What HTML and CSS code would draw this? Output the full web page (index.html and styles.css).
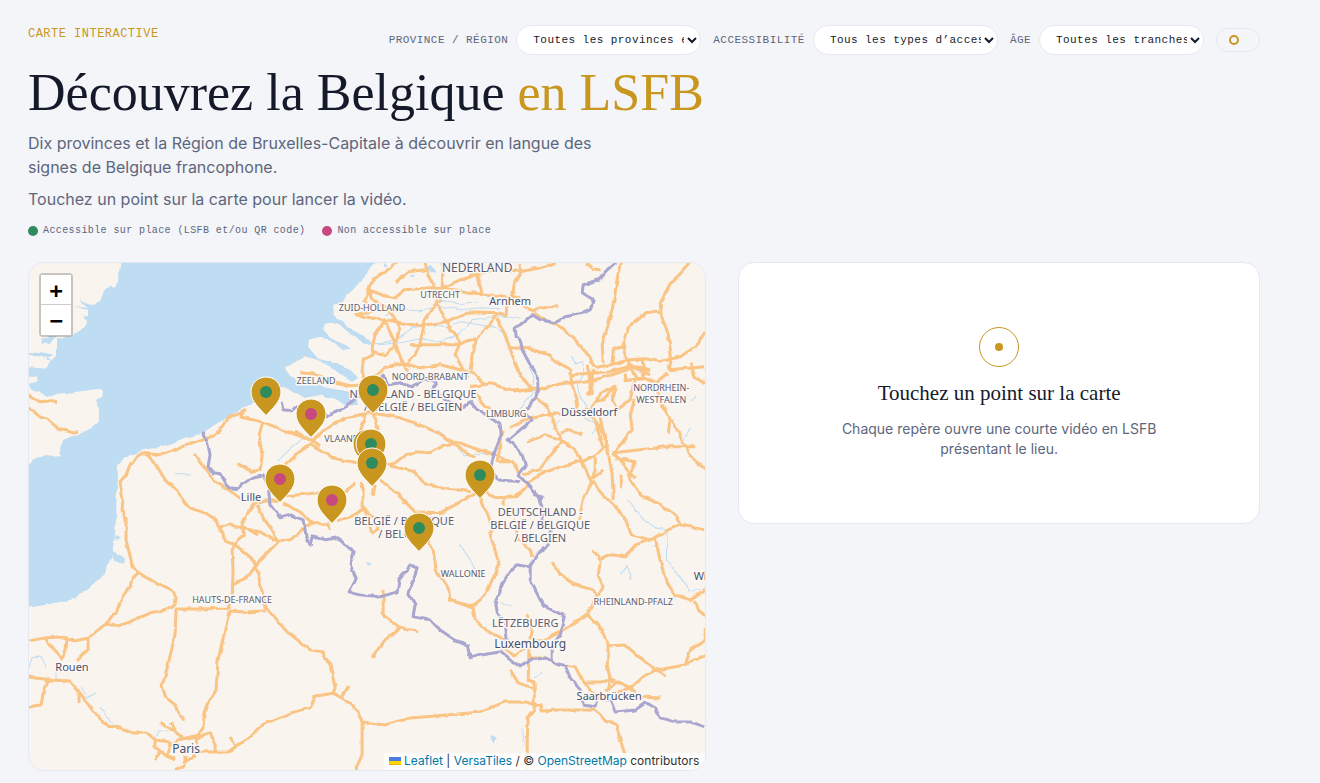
FILE: index.html
```html
<!DOCTYPE html>
<html lang="fr">
<head>
    <meta charset="UTF-8">
    <meta name="viewport" content="width=device-width, initial-scale=1">
    <title>Découvrez la Belgique en LSFB</title>
    <link rel="stylesheet" href="styles.css">
</head>
<body>

<main class="page">
    <header class="intro">
        <div class="topbar">
            <p class="eyebrow">Carte interactive</p>
            <form class="filters">
                <label for="province">Province / Région</label>
                <select id="province" class="filter">
                    <option>Toutes les provinces et régions</option>
                    <option>Bruxelles-Capitale</option>
                    <option>Hainaut</option>
                    <option>Liège</option>
                    <option>Namur</option>
                </select>
                <label for="acces">Accessibilité</label>
                <select id="acces" class="filter">
                    <option>Tous les types d’accessibilité</option>
                    <option>Accessible sur place</option>
                    <option>Non accessible sur place</option>
                </select>
                <label for="age">Âge</label>
                <select id="age" class="filter filter-age">
                    <option>Toutes les tranches d’âge</option>
                    <option>Enfants</option>
                    <option>Adultes</option>
                </select>
                <button type="button" class="status" aria-label="Réinitialiser"><span class="ring"></span></button>
            </form>
        </div>
        <h1>Découvrez la Belgique <em>en LSFB</em></h1>
        <p class="lead">Dix provinces et la Région de Bruxelles-Capitale à découvrir en langue des signes de Belgique francophone.</p>
        <p class="lead">Touchez un point sur la carte pour lancer la vidéo.</p>
        <ul class="legend">
            <li><span class="dot green"></span>Accessible sur place (LSFB et/ou QR code)</li>
            <li><span class="dot pink"></span>Non accessible sur place</li>
        </ul>
    </header>

    <div class="layout">
        <section class="map" aria-label="Carte">
            <svg class="tiles" viewBox="29 263 676 507" preserveAspectRatio="xMidYMid slice">
                <defs>
                    <filter id="rough" x="0" y="0" width="100%" height="100%">
                        <feTurbulence type="fractalNoise" baseFrequency="0.1" numOctaves="2" seed="4"/>
                        <feDisplacementMap in="SourceGraphic" scale="4" xChannelSelector="R" yChannelSelector="G"/>
                    </filter>
                </defs>
                <rect class="land" x="20" y="255" width="700" height="530"/>

                <g filter="url(#rough)">
                    <!-- mer du Nord et Manche -->
                    <path class="water" d="M120 250L120 266 118 280 115 287 110 286 104 292 100 301 96 305 90 305 82 302 80 298 81 303 88 308 72 307 88 310 88 316 82 317 87 321 84 327 78 333 66 337 57 338 57 355 51 361 45 369 36 368 20 367 20 377 36 377 37 381 30 383 31 390 39 391 42 394 51 397 57 394 55 389 48 384 40 382 40 388 56 394 68 393 85 391 100 389 103 391 102 397 96 400 99 410 99 421 90 429 80 434 64 439 60 447 61 458 52 456 43 455 35 459 29 465 20 467 20 609 45 605 60 602 75 599 90 588 105 574 107 565 112 558 113 548 115 535 116 515 117 490 118 475 116 465 122 462 130 455 145 450 165 446 185 438 203 433 215 425 240 410 255 402 268 394 283 387 292 391 305 398 320 395 335 399 347 406 357 405 358 395 345 391 332 389 320 385 308 386 298 382 290 376 285 369 295 362 306 357 317 360 328 366 340 375 352 382 358 378 350 370 340 366 330 362 318 359 308 347 309 340 320 337 332 342 342 350 352 349 340 344 330 337 323 330 325 325 333 323 342 327 350 334 362 342 372 345 368 339 352 330 342 322 334 316 333 305 342 303 349 294 360 282 370 268 376 263 378 250Z"/>
                    <path class="water" d="M29 352L44 354 54 356 44 360 54 361 45 358 29 354ZM42 339L57 336 50 343 40 343ZM111 550L124 559 123 564 114 561ZM115 535L122 538 116 540ZM384 262L388 266 384 268ZM430 265L436 271 431 273 427 268ZM412 274L415 278 410 278ZM490 736L496 738 492 744ZM366 562L372 564 368 566Z"/>
                    <path class="river" d="M362 342L380 344 400 338 412 328 428 324 446 327 460 322 480 325 497 328 508 338M378 345L400 343 420 339 440 342 456 336 472 320 500 316 520 319M385 316L400 310 420 311 440 306 460 310 480 308 500 309M437 303L445 300 457 305 478 303M571 356L576 364 582 362 584 374 577 385 580 398 586 404 584 418 597 425 593 435M529 367L534 378 532 392 522 407 508 418M278 461L288 451 300 441 309 436M437 430L450 440 464 455 490 453M29 668L32 658 40 656 46 668M56 681L56 672 64 666M81 687L88 698 96 692M100 707L112 724M154 739L158 731 168 731M628 500L637 514 655 528 667 530 666 560 680 578 690 592 705 588M620 575L628 566 630 580M460 545L470 560 480 580M190 474L174 474M560 420L552 430M522 727L524 745M534 678L542 673M500 604L512 606M600 420L602 434M690 400L696 396M684 440L690 428"/>

                    <g id="roads">
                        <path d="M29 396L40 402 52 401 57 402M29 408L40 417 48 420 60 430 70 432 78 432"/>
                        <path d="M137 455L130 465 126 475 120 482 123 500 122 510 126 520 126 540 131 560 132 566 137 572 133 580 128 590 118 608 107 623 97 631 88 638 75 641 57 637 45 638 29 641"/>
                        <path d="M137 455L145 454 160 455 173 451 185 446 203 440 213 436 219 431 228 418 245 411 240 417 265 423 285 431 310 440"/>
                        <path d="M145 453L155 463 165 480 180 495 190 508 205 513 216 520 220 530 227 542 235 545 250 557 256 567 261 587 266 608 287 632 310 650 322 652 330 665 335 688 333 693"/>
                        <path d="M137 572L145 577 158 584 170 589 176 598 175 605 160 612 145 615 130 622 118 626 107 623"/>
                        <path d="M175 609L200 609 229 608 232 600 233 570 232 550 237 541 243 535 243 520 255 503 265 500 278 502M233 585L245 578 256 567M229 611L245 612 266 611"/>
                        <path d="M229 611L225 630 218 660 216 690 210 700 204 715 203 728 197 737 187 739"/>
                        <path d="M176 609L175 635 168 665 162 685 165 697 175 705 178 713 184 720"/>
                        <path d="M194 453L205 468 215 482 230 491 241 499M237 464L245 469 257 472M220 527L230 525 243 528 250 531 258 535"/>
                        <path d="M240 465L252 472 260 470 262 455 259 435 263 421M257 505L263 518 272 530 278 542 260 560 256 567M240 528L260 532 278 542 290 540 298 535 305 525 313 524 329 524 330 530M283 503L300 512 313 524M283 496L300 495 318 493 340 495 355 484M337 521L350 517 363 509 363 490 361 482M363 509L368 520 372 534 378 530 376 520 364 509M372 495L374 485"/>
                        <path d="M286 466L295 455 310 445 332 458 345 461 357 463M295 432L310 440 320 447M310 445L323 431 345 418 370 413 400 418 420 425 440 434 455 445 475 458"/>
                        <path d="M388 465L395 463 405 455 415 452 430 453 445 445 460 443 478 450 497 455 510 462M380 480L395 492 415 512 440 513 455 505 470 496 482 490M390 466L415 472 425 485 445 488 470 492"/>
                        <path d="M428 540L433 550 436 570 448 588 450 600 472 608M480 497L485 510 492 525 490 535 495 550 499 565 492 580 485 596 470 608M482 490L495 498 515 497 525 488M504 497L504 505M513 520L518 540 530 550 532 557"/>
                        <path d="M397 263L385 272 375 278 368 290 365 300 372 310M368 290L385 296 395 298 405 290 430 288 455 290 478 294 490 295 520 298M372 311L355 315 370 318 385 320 400 323 420 326 445 322 470 312 497 313M368 290L372 300 385 308 392 315 400 330 395 345 385 355 373 352M385 320L375 335 372 348 373 355 363 360 362 372 366 385 370 395 372 413M383 318L395 343 403 365 408 372"/>
                        <path d="M437 303L425 320 420 343 415 355 405 365M437 303L450 330 460 343 455 355 463 370 468 378M410 345L440 345 458 345 475 338M425 263L428 275 435 290 437 303M443 263L442 288 440 303M442 288L460 280 478 275M366 385L385 368 402 363 420 368 440 365 468 372M300 373L320 375 335 382 350 386 365 385M395 283L408 272 425 270M366 415L360 432M374 413L378 430M370 413L376 400 372 385M455 376L472 372 484 384"/>
                        <path d="M470 275L478 277 482 295M520 263L520 275 514 285 512 300M478 275L500 268 520 272 540 268 555 263M497 313L506 315 507 300M497 313L490 325 475 340 472 355 470 370M497 318L505 335 512 355 520 375 532 390M523 307L533 311 540 307 558 307M533 313L545 320 560 327 575 340 590 358 594 368M586 263L593 269 600 270"/>
                        <path d="M510 348L530 349 548 355 560 364 571 370 571 383 577 400 575 410M470 387L490 384 515 391 540 389 560 384 580 382 595 380 615 374 635 367 650 370M620 263L617 280 612 310 605 335 602 345 603 363M690 263L670 285 660 303 661 315 668 335 671 356 668 370M661 312L645 314 628 328 622 345 628 365 637 378 655 381"/>
                        <path d="M594 368L610 365 630 360 645 359 660 362 680 357 695 347 705 332M592 370L592 395 586 394M571 375L595 373 610 372 630 366 650 374M668 370L705 367M690 363L695 378 705 383M668 373L655 383 645 379 630 380M587 365L590 383 589 395M612 363L613 350 625 346M642 359L644 380M625 374L626 381 636 379"/>
                        <path d="M474 393L485 405 495 413M535 398L545 405 552 418 556 430 562 442M615 386L600 395 590 408 575 415 550 414 530 418 510 428M615 386L604 400 594 402M616 388L612 400 617 410 630 400 634 380M634 400L630 415 632 430 620 445 613 453M655 384L663 408 670 420 668 433M605 440L598 425 590 415M600 418L604 435 608 453M560 433L570 430 582 435M590 408L597 430 603 448"/>
                        <path d="M527 442L545 435 561 440 575 450 582 462 590 480 600 492 613 505 625 517 628 528 632 535 650 540 655 538 668 530 680 525 705 530M613 453L640 450 665 447 695 447M672 420L683 443 690 455 705 470M592 481L583 500 579 520M582 460L560 467 545 472 530 482 525 488 515 497M523 474L540 470 550 455 562 442M613 453L625 465 630 480 640 495 660 505 675 515 680 525M608 453L612 475 613 500M582 462L595 455 608 445M592 479L603 470M595 455L595 470 592 479M615 458L635 462 630 475 636 478M620 488L622 475M503 430L497 462 512 462 520 475"/>
                        <path d="M655 538L660 560 665 580 675 595 690 600 705 590M650 540L635 545 625 557 612 555 600 560 593 550M600 562L598 575 603 588 597 595M553 562L560 575 575 585 590 589 597 595 587 615 598 625 608 645 607 665 610 680 608 690M587 615L575 622 560 632 545 640 530 642M607 646L625 645 640 658 657 670 645 675 632 687 610 695M657 670L685 665 705 655M685 665L690 650 705 640 705 628M657 670L665 675M695 600L698 610 705 616"/>
                        <path d="M565 665L575 667 583 682 600 682 610 680 625 685 640 697 660 698M583 682L590 690 600 700M605 692L618 682 632 687M529 640L528 680 534 682 534 710 528 717 527 740 527 770M527 615L532 630 529 645 515 656 505 650M529 658L545 658 555 662M510 670L518 683 533 688"/>
                        <path d="M333 693L345 700 358 712 362 722 385 725 410 718 435 716 480 712 505 702 525 702 540 706 541 711 560 710 593 710 605 720 616 725 620 740 625 755M335 693L316 696 310 708 290 713 262 725 248 738 228 752 200 752M362 722L362 755 355 770M342 698L349 686M230 737L235 745"/>
                        <path d="M29 677L50 680 70 681 80 693 92 710 107 726 120 728 132 733 147 733 155 740 170 742M48 680L43 695 41 705 29 707M45 638L52 648 63 660M67 638L66 650 63 658M88 639L88 650 77 661M79 693L79 703"/>
                        <path d="M160 722L175 732 185 739M171 722L176 732M155 740L155 747 165 755 175 758M178 740L200 735M195 740L210 733 215 745 215 752M175 770L185 765 185 755M170 742L168 757 175 760M155 760L160 752M195 735L197 745 193 758 183 762M178 740L170 745"/>
                        <path d="M383 600L383 615 400 628 385 640 372 657M400 627L418 632M448 600L473 607 475 620 485 630 505 640M383 600L384 590"/>
                    </g>

                    <g class="borders">
                        <path d="M203 432L208 445 210 455 208 467 213 473 220 474 225 483 230 488 237 489 245 482 255 478 263 476 268 485 270 505 280 518 290 515 303 520 305 530 306 538 310 545 312 537 325 540 338 538 345 545 354 552 350 565 356 578 349 592 360 595 380 597 397 592 399 580 410 566 417 568 413 580 408 593 415 605 413 617 430 620 440 630 455 640 467 645 470 658 480 655 500 652 510 660 520 666 530 660 545 658 555 663 565 666 570 678 580 690 583 705 595 707 597 697 610 700 615 712 635 710 645 703 655 708 660 718 675 722 690 722 705 727"/>
                        <path d="M281 403L283 410 292 411 300 405 311 403 328 416 345 408 355 399 368 388 384 376 388 385 400 383 412 387 425 380 437 383 432 390 445 400 462 408 470 402 477 410 490 418 500 425 501 435 495 450 490 470 497 480 520 482"/>
                        <path d="M615 263L607 270 598 280 583 285 582 293 593 300 590 310 580 314 565 317 555 323 540 320 532 315 520 325 514 328 515 337 520 340 522 350 530 365 537 375 538 390 530 405 525 415 533 420 520 430 508 440 522 455 525 465 518 475 530 487 538 497 543 510 542 520 550 530 548 545 538 553 530 565 530 580 540 600 545 607 558 613 565 617 560 635 552 645 552 663"/>
                        <path d="M530 567L515 565 505 580 495 600 497 612 505 625 507 640 502 650M534 495L542 497 540 501"/>
                    </g>
                </g>

                <g class="labels">
                    <text class="country main" x="477" y="272">NEDERLAND</text>
                    <text class="country" x="413" y="398">NEDERLAND - BELGIQUE</text>
                    <text class="country" x="413" y="411">/ BELGIË / BELGIEN</text>
                    <text class="country" x="404" y="525">BELGIË / BELGIQUE</text>
                    <text class="country" x="404" y="538">/ BELGIEN</text>
                    <text class="country" x="540" y="516">DEUTSCHLAND -</text>
                    <text class="country" x="540" y="529">BELGIË / BELGIQUE</text>
                    <text class="country" x="540" y="542">/ BELGIEN</text>
                    <text class="country" x="525" y="627">LËTZEBUERG</text>
                    <text class="region" x="440" y="298">UTRECHT</text>
                    <text class="region" x="372" y="311">ZUID-HOLLAND</text>
                    <text class="region" x="316" y="384">ZEELAND</text>
                    <text class="region" x="430" y="380">NOORD-BRABANT</text>
                    <text class="region" x="506" y="417">LIMBURG</text>
                    <text class="region" x="661" y="391">NORDRHEIN-</text>
                    <text class="region" x="661" y="403">WESTFALEN</text>
                    <text class="region" x="353" y="442">VLAANDEREN</text>
                    <text class="region" x="463" y="577">WALLONIE</text>
                    <text class="region" x="232" y="603">HAUTS-DE-FRANCE</text>
                    <text class="region" x="633" y="605">RHEINLAND-PFALZ</text>
                    <text class="city" x="510" y="305">Arnhem</text>
                    <text class="city" x="589" y="416">Düsseldorf</text>
                    <text class="city" x="251" y="501">Lille</text>
                    <text class="city" x="72" y="671">Rouen</text>
                    <text class="city" x="609" y="700">Saarbrücken</text>
                    <text class="city" x="722" y="580">Wiesbaden</text>
                    <text class="city capital" x="530" y="648">Luxembourg</text>
                    <text class="city capital" x="186" y="753">Paris</text>
                </g>

                <symbol id="pin" viewBox="0 0 32 40">
                    <path d="M16 1C7.700 1 1 7.500 1 16c0 9 8 16 15 23.500C23 32 31 25 31 16 31 7.500 24.300 1 16 1z" fill="#c9971f" stroke="#fff" stroke-width="1"/>
                    <circle cx="16" cy="16" r="6" fill="currentColor"/>
                </symbol>
            </svg>

            <div class="pins" id="pins"></div>

            <div class="zoom">
                <button type="button" aria-label="Zoom avant">+</button>
                <button type="button" aria-label="Zoom arrière">−</button>
            </div>

            <p class="attribution">
                <a href="#leaflet"><svg class="flag" width="12" height="8" viewBox="0 0 12 8"><path fill="#4c7be1" d="M0 0h12v4H0z"/><path fill="#ffd500" d="M0 4h12v3H0z"/><path fill="#e0bc00" d="M0 7h12v1H0z"/></svg> Leaflet</a>
                <span aria-hidden="true">|</span>
                <a href="#versatiles">VersaTiles</a> / © <a href="#osm">OpenStreetMap</a> contributors
            </p>
        </section>

        <aside class="panel">
            <span class="target"></span>
            <h2>Touchez un point sur la carte</h2>
            <p>Chaque repère ouvre une courte vidéo en LSFB présentant le lieu.</p>
        </aside>
    </div>
</main>

<script>
    // position de la pointe, en % de la carte
    const lieux = [
        { nom: 'Anvers', x: 50.9, y: 29.8, acces: true },
        { nom: 'Bruges', x: 35.1, y: 30.2, acces: true },
        { nom: 'Gand', x: 41.7, y: 34.5, acces: false },
        { nom: 'Bruxelles', x: 50.1, y: 40.4, acces: true },
        { nom: 'Atomium', x: 50.6, y: 40.4, acces: true },
        { nom: 'Waterloo', x: 50.7, y: 44.2, acces: true },
        { nom: 'Liège', x: 66.7, y: 46.5, acces: true },
        { nom: 'Tournai', x: 37.1, y: 47.3, acces: false },
        { nom: 'Mons', x: 44.8, y: 51.5, acces: false },
        { nom: 'Namur', x: 57.7, y: 57, acces: true }
    ];

    const pins = document.getElementById('pins');

    lieux.forEach((lieu) => {
        const btn = document.createElement('button');
        btn.type = 'button';
        btn.className = lieu.acces ? 'pin ok' : 'pin non';
        btn.style.left = lieu.x + '%';
        btn.style.top = lieu.y + '%';
        btn.setAttribute('aria-label', lieu.nom);
        btn.innerHTML = '<svg width="32" height="40"><use href="#pin"/></svg>';
        pins.appendChild(btn);
    });
</script>

</body>
</html>
```
FILE: styles.css
```css
* {
    box-sizing: border-box;
}

body {
    margin: 0;
    background: #f3f5f9;
    color: #141a2a;
    font-family: Inter, sans-serif;
    font-size: 16px;
    line-height: 24px;
}

h1, h2, p, ul {
    margin: 0;
    padding: 0;
}

.page {
    padding: 25px 60px 12px 28px;
}

/* en-tête */
.topbar {
    display: flex;
    justify-content: space-between;
    align-items: flex-start;
}

.eyebrow,
.filters,
.filter,
.legend {
    font-family: "Liberation Mono", monospace;
    letter-spacing: 0.04em;
}

.eyebrow {
    font-size: 12px;
    line-height: 18px;
    color: #c9971f;
    text-transform: uppercase;
}

.filters {
    display: flex;
    align-items: center;
    font-size: 11px;
    line-height: 16px;
    color: #5d667c;
}

.filters label {
    margin-right: 8px;
    text-transform: uppercase;
}

.filter {
    width: 185px;
    height: 30px;
    margin-right: 12px;
    padding: 0 0 0 12px;
    border: 1px solid #e4e8f1;
    border-radius: 15px;
    background: #fff;
    color: #141a2a;
    font-size: 11px;
}

.filter-age {
    width: 165px;
}

.status {
    display: flex;
    align-items: center;
    width: 44px;
    height: 24px;
    padding: 0 12px;
    border: 1px solid #e4e8f1;
    border-radius: 12px;
    background: transparent;
}

.ring {
    width: 10px;
    height: 10px;
    border: 2px solid #c9971f;
    border-radius: 50%;
}

h1 {
    margin: 10px 0 10px;
    font-family: "Liberation Serif", serif;
    font-size: 52px;
    font-weight: 400;
    line-height: 56px;
}

h1 em {
    color: #c9971f;
    font-style: normal;
}

.lead {
    max-width: 600px;
    margin-bottom: 8px;
    color: #5d667c;
}

.legend {
    display: flex;
    gap: 17px;
    margin: 12px 0 23px;
    list-style: none;
    font-size: 10px;
    line-height: 16px;
    color: #5d667c;
}

.legend li {
    display: flex;
    align-items: center;
    gap: 5px;
}

.dot {
    width: 10px;
    height: 10px;
    border-radius: 50%;
}

.green { background: #2e8b5e; }
.pink { background: #c8497f; }

/* carte + panneau */
.layout {
    display: grid;
    grid-template-columns: 1.3fr 1fr;
    gap: 32px;
    align-items: start;
}

.map {
    position: relative;
    aspect-ratio: 4 / 3;
    overflow: hidden;
    border: 1px solid #e4e8f1;
    border-radius: 16px;
}

.tiles {
    display: block;
    width: 100%;
    height: 100%;
}

.land { fill: #f9f4ee; }
.water { fill: #bedcf2; }

.river {
    fill: none;
    stroke: #bedcf2;
    stroke-width: 1;
}

#roads {
    fill: none;
    stroke: #fac485;
    stroke-width: 3;
    stroke-linejoin: round;
}

.borders {
    fill: none;
    stroke: #a9a7cf;
    stroke-width: 3;
    stroke-linejoin: round;
}

.labels {
    font-family: "Noto Sans", sans-serif;
    text-anchor: middle;
    paint-order: stroke;
    stroke: #fbf8f5;
    stroke-width: 3px;
    stroke-linejoin: round;
}

.country {
    font-size: 11px;
    fill: #5c5c70;
}

.main {
    font-size: 12px;
}

.region {
    font-size: 9px;
    fill: #5c5c70;
}

.city {
    font-size: 11px;
    fill: #46506c;
}

.capital {
    font-size: 12px;
}

.pins {
    position: absolute;
    inset: 0;
}

.pin {
    position: absolute;
    padding: 0;
    border: 0;
    background: none;
    line-height: 0;
    transform: translate(-50%, -100%);
    cursor: pointer;
}

.ok { color: #2e8b5e; }
.non { color: #c8497f; }

.zoom {
    position: absolute;
    top: 10px;
    left: 10px;
    display: flex;
    flex-direction: column;
    border: 2px solid rgba(0, 0, 0, 0.2);
    border-radius: 4px;
    background-clip: padding-box;
}

.zoom button {
    width: 30px;
    height: 30px;
    padding: 0;
    border: 0;
    background: #fff;
    color: #000;
    font: bold 22px/32px "DejaVu Sans Mono", monospace;
    cursor: pointer;
}

.zoom button:first-child {
    border-bottom: 1px solid #ccc;
}

.attribution {
    position: absolute;
    right: 0;
    bottom: 0;
    padding: 0 6px 1px 5px;
    background: rgba(255, 255, 255, 0.8);
    color: #333;
    font-size: 12px;
    line-height: 16px;
}

.attribution a {
    color: #0078a8;
    text-decoration: none;
}

.panel {
    display: flex;
    flex-direction: column;
    align-items: center;
    gap: 14px;
    padding: 64px 32px;
    border: 1px solid #e4e8f1;
    border-radius: 16px;
    background: #fff;
    text-align: center;
}

.target {
    display: grid;
    place-items: center;
    width: 40px;
    height: 40px;
    border: 1px solid #c9971f;
    border-radius: 50%;
}

.target::after {
    content: "";
    width: 8px;
    height: 8px;
    border-radius: 50%;
    background: #c9971f;
}

.panel h2 {
    font-family: "Liberation Serif", serif;
    font-size: 21px;
    font-weight: 400;
    line-height: 24px;
}

.panel p {
    max-width: 320px;
    color: #5d667c;
    font-size: 14px;
    line-height: 20px;
}
```
